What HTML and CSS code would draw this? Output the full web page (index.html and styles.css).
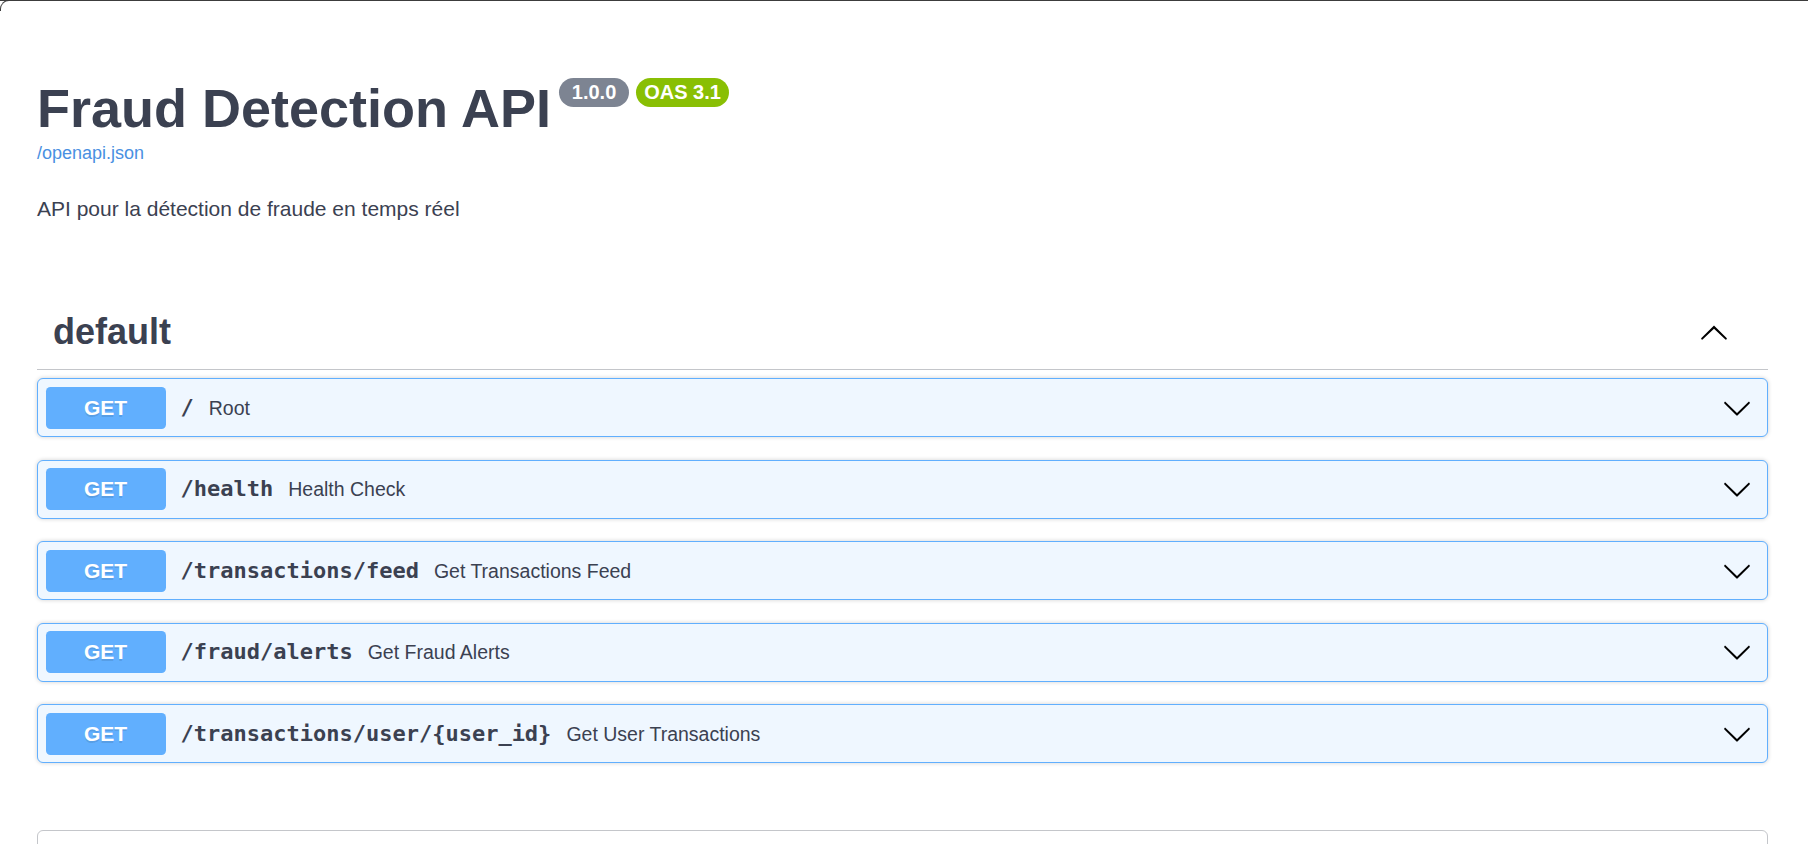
FILE: index.html
```html
<!DOCTYPE html>
<html lang="fr">
<head>
<meta charset="utf-8">
<title>Fraud Detection API - Swagger UI</title>
<link rel="stylesheet" href="styles.css">
</head>
<body>
<div class="page">
  <div class="wrapper">
    <div class="info">
      <div class="title-row">
        <h2 class="title">Fraud Detection API</h2>
        <span class="badge badge-version">1.0.0</span>
        <span class="badge badge-oas">OAS 3.1</span>
      </div>
      <a class="base-link" href="#">/openapi.json</a>
      <p class="description">API pour la détection de fraude en temps réel</p>
    </div>

    <section class="tag-section">
      <div class="tag-header">
        <h3 class="tag-name">default</h3>
        <svg class="tag-arrow" viewBox="0 0 20 20" width="30" height="30" aria-hidden="true">
          <path d="M17.418 14.908c.272.268.709.268.979 0s.271-.701 0-.969l-7.908-7.83c-.27-.268-.707-.268-.979 0l-7.908 7.83c-.27.268-.27.701 0 .969.271.268.709.268.979 0L10 7.767l7.418 7.141z"/>
        </svg>
      </div>

      <div class="opblock">
        <div class="summary">
          <span class="method">GET</span>
          <span class="path">/</span>
          <span class="summary-desc">Root</span>
          <svg class="op-arrow" viewBox="0 0 20 20" width="30" height="30" aria-hidden="true"><path d="M17.418 6.109c.272-.268.709-.268.979 0s.271.701 0 .969l-7.908 7.83c-.27.268-.707.268-.979 0l-7.908-7.830c-.27-.268-.27-.701 0-.969.271-.268.709-.268.979 0L10 13.25l7.418-7.141z"/></svg>
        </div>
      </div>

      <div class="opblock">
        <div class="summary">
          <span class="method">GET</span>
          <span class="path">/health</span>
          <span class="summary-desc">Health Check</span>
          <svg class="op-arrow" viewBox="0 0 20 20" width="30" height="30" aria-hidden="true"><path d="M17.418 6.109c.272-.268.709-.268.979 0s.271.701 0 .969l-7.908 7.83c-.27.268-.707.268-.979 0l-7.908-7.83c-.27-.268-.27-.701 0-.969.271-.268.709-.268.979 0L10 13.25l7.418-7.141z"/></svg>
        </div>
      </div>

      <div class="opblock">
        <div class="summary">
          <span class="method">GET</span>
          <span class="path">/transactions/feed</span>
          <span class="summary-desc">Get Transactions Feed</span>
          <svg class="op-arrow" viewBox="0 0 20 20" width="30" height="30" aria-hidden="true"><path d="M17.418 6.109c.272-.268.709-.268.979 0s.271.701 0 .969l-7.908 7.83c-.27.268-.707.268-.979 0l-7.908-7.83c-.27-.268-.27-.701 0-.969.271-.268.709-.268.979 0L10 13.25l7.418-7.141z"/></svg>
        </div>
      </div>

      <div class="opblock">
        <div class="summary">
          <span class="method">GET</span>
          <span class="path">/fraud/alerts</span>
          <span class="summary-desc">Get Fraud Alerts</span>
          <svg class="op-arrow" viewBox="0 0 20 20" width="30" height="30" aria-hidden="true"><path d="M17.418 6.109c.272-.268.709-.268.979 0s.271.701 0 .969l-7.908 7.83c-.27.268-.707.268-.979 0l-7.908-7.83c-.27-.268-.27-.701 0-.969.271-.268.709-.268.979 0L10 13.25l7.418-7.141z"/></svg>
        </div>
      </div>

      <div class="opblock">
        <div class="summary">
          <span class="method">GET</span>
          <span class="path">/transactions/user/{user_id}</span>
          <span class="summary-desc">Get User Transactions</span>
          <svg class="op-arrow" viewBox="0 0 20 20" width="30" height="30" aria-hidden="true"><path d="M17.418 6.109c.272-.268.709-.268.979 0s.271.701 0 .969l-7.908 7.83c-.27.268-.707.268-.979 0l-7.908-7.83c-.27-.268-.27-.701 0-.969.271-.268.709-.268.979 0L10 13.25l7.418-7.141z"/></svg>
        </div>
      </div>
    </section>

    <section class="models"></section>
  </div>
</div>
</body>
</html>
```

FILE: styles.css
```css
html, body {
  margin: 0;
  padding: 0;
  background: #ffffff;
}

body {
  font-family: "Liberation Sans", Arial, sans-serif;
  color: #3b4151;
}

.page {
  position: relative;
  height: 844px;
  overflow: hidden;
  box-sizing: border-box;
  border-top: 1px solid #3c3c3c;
}

.page::before {
  content: "";
  position: absolute;
  top: -1px;
  left: 0;
  width: 10px;
  height: 10px;
  border-top: 1px solid #3c3c3c;
  border-left: 1px solid #3c3c3c;
  border-top-left-radius: 9px;
}

.wrapper {
  padding: 0 40px 0 37px;
}

/* ---------- info ---------- */
.info {
  padding-top: 76px;
}

.title-row {
  display: flex;
  align-items: flex-start;
  gap: 6px;
}

.title {
  margin: 0;
  font-size: 54px;
  line-height: 62px;
  font-weight: 700;
  color: #3b4151;
}

.badge {
  margin-top: 1px;
  height: 29px;
  line-height: 29px;
  border-radius: 999px;
  color: #ffffff;
  font-size: 20px;
  font-weight: 700;
  font-family: "Liberation Sans", Arial, sans-serif;
  white-space: nowrap;
}

.badge-version {
  margin-left: 2px;
  background: #7d8492;
  padding: 0 12.75px;
}

.badge-oas {
  margin-left: 1px;
  background: #89bf04;
  padding: 0 8.15px;
}

.base-link {
  display: block;
  margin-top: 4px;
  font-size: 18px;
  line-height: 21px;
  color: #4990e2;
  text-decoration: none;
  width: max-content;
}

.description {
  margin: 33px 0 0;
  font-size: 21px;
  line-height: 24px;
  color: #3b4151;
}

/* ---------- tag section ---------- */
.tag-section {
  margin-top: 75px;
  display: flex;
  flex-direction: column;
}

.tag-header {
  display: flex;
  align-items: center;
  justify-content: space-between;
  padding: 15px 39px 16px 16px;
  border-bottom: 1px solid rgba(59, 65, 81, 0.3);
  margin-bottom: 8px;
}

.tag-name {
  margin: 0;
  font-size: 36px;
  line-height: 42px;
  font-weight: 700;
  color: #3b4151;
}

.tag-arrow {
  display: block;
  fill: #000000;
}

/* ---------- operation blocks ---------- */
.opblock {
  border: 1px solid #61affe;
  background: #eff7ff;
  border-radius: 6px;
  box-shadow: 0 0 4.5px rgba(0, 0, 0, 0.19);
  margin-bottom: 22.5px;
}

.summary {
  display: flex;
  align-items: center;
  padding: 7.5px 15px 7.5px 7.5px;
}

.method {
  flex: none;
  min-width: 120px;
  padding: 9px 0;
  line-height: 24px;
  font-size: 21px;
  font-weight: 700;
  text-align: center;
  color: #ffffff;
  background: #61affe;
  border-radius: 4.5px;
  text-shadow: 0 1.5px 0 rgba(0, 0, 0, 0.1);
}

.path {
  flex: none;
  padding: 0 15px;
  font-family: "DejaVu Sans Mono", "Liberation Mono", monospace;
  font-size: 22px;
  font-weight: 700;
  color: #3b4151;
  line-height: 24px;
}

.summary-desc {
  flex: 1;
  font-size: 19.5px;
  line-height: 24px;
  color: #3b4151;
}

.op-arrow {
  flex: none;
  display: block;
  fill: #000000;
}

/* ---------- models ---------- */
.models {
  margin-top: 44.5px;
  height: 80px;
  border: 1px solid rgba(59, 65, 81, 0.3);
  border-radius: 6px;
}
```
